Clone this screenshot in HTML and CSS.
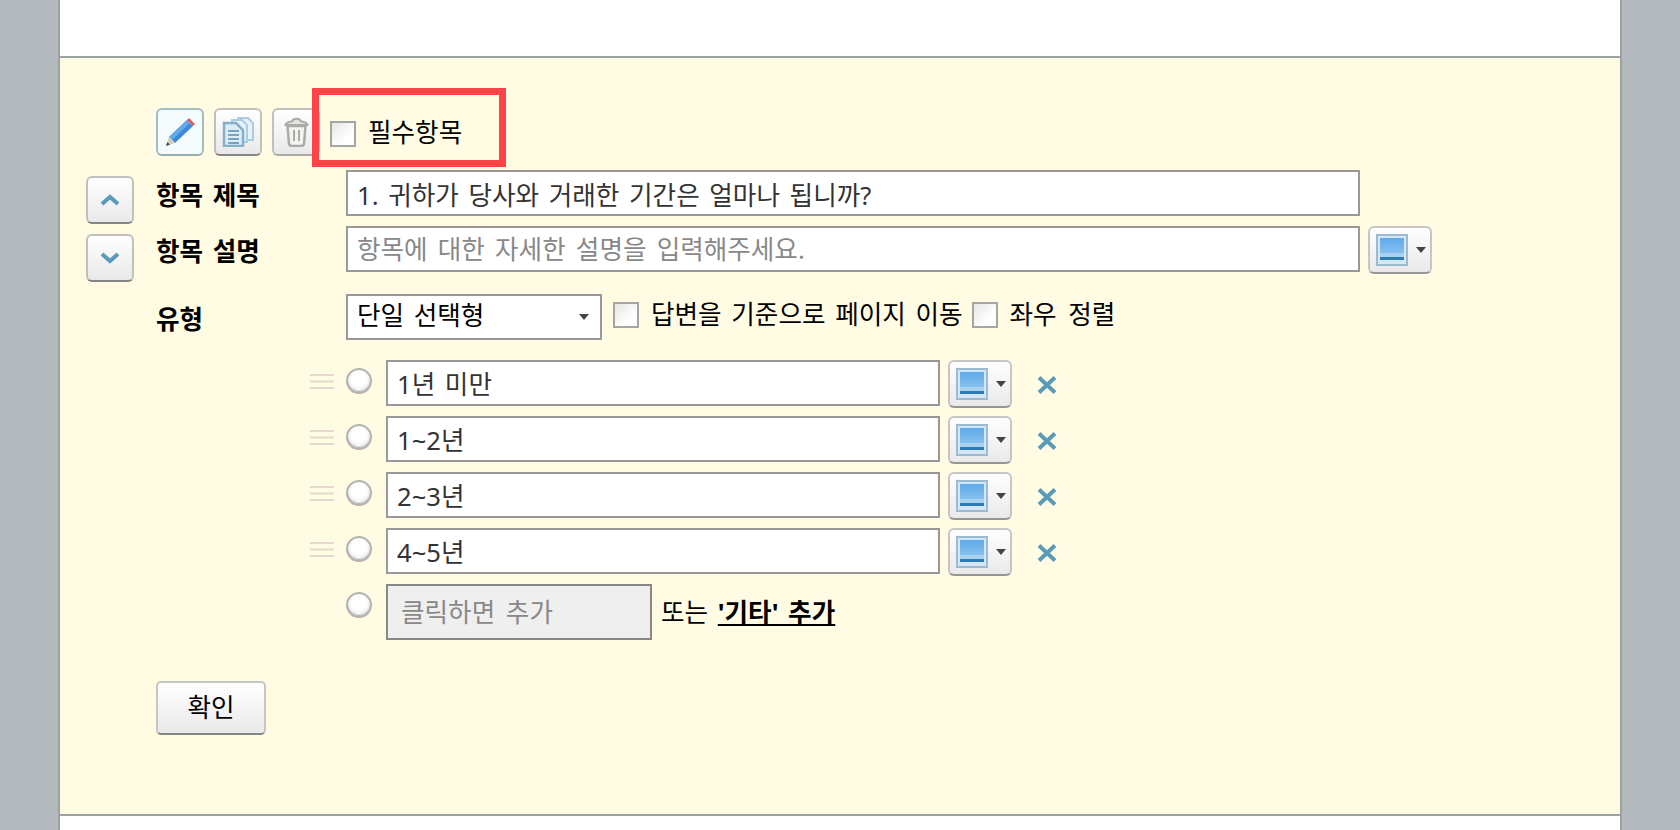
FILE: index.html
```html
<!DOCTYPE html>
<html lang="ko">
<head>
<meta charset="utf-8">
<title>항목 편집</title>
<link rel="stylesheet" href="styles.css">
</head>
<body>
<svg class="defs" width="0" height="0" aria-hidden="true">
  <defs>
    <linearGradient id="g-style" x1="0" y1="0" x2="0" y2="1">
      <stop offset="0" stop-color="#5eaaea"/>
      <stop offset="1" stop-color="#86c0ef"/>
    </linearGradient>
    <symbol id="i-style" viewBox="0 0 32 32">
      <rect x="1" y="1" width="30" height="30" fill="#d5e7f4" stroke="#9bbbd0" stroke-width="2"/>
      <rect x="4" y="4" width="24" height="15" fill="url(#g-style)"/>
      <rect x="4" y="19" width="24" height="4" fill="#a9d0ec"/>
      <rect x="4" y="23" width="24" height="3" fill="#2a7cb2"/>
    </symbol>
    <symbol id="i-x" viewBox="0 0 20 18">
      <path d="M2 1.500 18 16.500M18 1.500 2 16.500" fill="none" stroke="#5a9abb" stroke-width="4"/>
    </symbol>
    <symbol id="i-handle" viewBox="0 0 24 15">
      <path d="M0 1h24M0 7.500h24M0 14h24" stroke="#e6d8cc" stroke-width="2"/>
    </symbol>
  </defs>
</svg>
<div class="page">
  <div class="top"></div>
  <section class="editor">
    <div class="toolbar">
      <button class="sq sq-active" type="button" aria-label="편집">
        <svg class="icon" width="30" height="30" viewBox="0 0 30 30">
          <path d="M22 3 28 9 10 26 4 20Z" fill="#3f88d8"/>
          <path d="M22 3 25 6 7 23 4 20Z" fill="#63a9ec"/>
          <path d="M22 3 24 1 30 7 28 9Z" fill="#e05a5a"/>
          <path d="M4 20 10 26 1 29Z" fill="#d9cfc0"/>
          <path d="M2.400 25 5 27.500 1 29Z" fill="#444"/>
        </svg>
      </button>
      <button class="sq" type="button" aria-label="복사">
        <svg class="icon" width="32" height="30" viewBox="0 0 32 30">
          <path d="M16 1H26L31 6V23H16Z" fill="#e6f3fa" stroke="#a9cde2" stroke-width="2"/>
          <path d="M10 3H20L25 8V25H10Z" fill="#e6f3fa" stroke="#a9cde2" stroke-width="2"/>
          <path d="M2 6H14L21 13V29H2Z" fill="#dcedf7" stroke="#86afca" stroke-width="2.500"/>
          <path d="M6 14H17M6 18H17M6 22H17M6 26H17" stroke="#7aa2bd" stroke-width="2"/>
        </svg>
      </button>
      <button class="sq sq-trash" type="button" aria-label="삭제">
        <svg class="icon" width="25" height="30" viewBox="0 0 25 30">
          <path d="M1.500 8C1.500 5 7 5 8.500 4 9 1 16 1 16.500 4 18 5 23.500 5 23.500 8Z" fill="#e4e4e0" stroke="#aaaaa6" stroke-width="2"/>
          <path d="M3.500 9 5 27Q5.500 29 8 29H17Q19.500 29 20 27L21.500 9Z" fill="#f3f3ef" stroke="#aaaaa6" stroke-width="2.500"/>
          <path d="M10 13V24M15 13V24" stroke="#aaaaa6" stroke-width="2"/>
        </svg>
      </button>
      <label class="check-label required"><input class="check" type="checkbox"><span>필수항목</span></label>
      <div class="highlight"></div>
    </div>
    <div class="form">
      <div class="arrows">
        <button class="sq" type="button" aria-label="위로">
          <svg class="icon" width="20" height="12" viewBox="0 0 20 12"><path d="M2 10 10 3 18 10" fill="none" stroke="#5a9abb" stroke-width="4"/></svg>
        </button>
        <button class="sq" type="button" aria-label="아래로">
          <svg class="icon" width="20" height="12" viewBox="0 0 20 12"><path d="M2 2 10 9 18 2" fill="none" stroke="#5a9abb" stroke-width="4"/></svg>
        </button>
      </div>
      <div class="fields">
        <div class="row row-title">
          <label class="label">항목 제목</label>
          <input class="text text-wide text-title" type="text" value="1. 귀하가 당사와 거래한 기간은 얼마나 됩니까?">
        </div>
        <div class="row row-desc">
          <label class="label">항목 설명</label>
          <input class="text text-wide text-desc" type="text" placeholder="항목에 대한 자세한 설명을 입력해주세요.">
          <button class="style-btn" type="button" aria-label="스타일"><svg class="icon" width="32" height="32"><use href="#i-style"/></svg><i class="caret"></i></button>
        </div>
        <div class="row row-type">
          <label class="label label-type">유형</label>
          <div class="select-wrap">
            <select class="select"><option>단일 선택형</option></select>
            <i class="caret"></i>
          </div>
          <label class="check-label jump"><input class="check" type="checkbox"><span>답변을 기준으로 페이지 이동</span></label>
          <label class="check-label align"><input class="check" type="checkbox"><span>좌우 정렬</span></label>
        </div>
        <div class="options">
          <div class="option">
            <svg class="handle" width="24" height="15"><use href="#i-handle"/></svg>
            <input class="radio" type="radio" name="q">
            <input class="text text-opt" type="text" value="1년 미만">
            <button class="style-btn" type="button" aria-label="스타일"><svg class="icon" width="32" height="32"><use href="#i-style"/></svg><i class="caret"></i></button>
            <svg class="remove icon" width="20" height="18"><use href="#i-x"/></svg>
          </div>
          <div class="option">
            <svg class="handle" width="24" height="15"><use href="#i-handle"/></svg>
            <input class="radio" type="radio" name="q">
            <input class="text text-opt" type="text" value="1~2년">
            <button class="style-btn" type="button" aria-label="스타일"><svg class="icon" width="32" height="32"><use href="#i-style"/></svg><i class="caret"></i></button>
            <svg class="remove icon" width="20" height="18"><use href="#i-x"/></svg>
          </div>
          <div class="option">
            <svg class="handle" width="24" height="15"><use href="#i-handle"/></svg>
            <input class="radio" type="radio" name="q">
            <input class="text text-opt" type="text" value="2~3년">
            <button class="style-btn" type="button" aria-label="스타일"><svg class="icon" width="32" height="32"><use href="#i-style"/></svg><i class="caret"></i></button>
            <svg class="remove icon" width="20" height="18"><use href="#i-x"/></svg>
          </div>
          <div class="option">
            <svg class="handle" width="24" height="15"><use href="#i-handle"/></svg>
            <input class="radio" type="radio" name="q">
            <input class="text text-opt" type="text" value="4~5년">
            <button class="style-btn" type="button" aria-label="스타일"><svg class="icon" width="32" height="32"><use href="#i-style"/></svg><i class="caret"></i></button>
            <svg class="remove icon" width="20" height="18"><use href="#i-x"/></svg>
          </div>
          <div class="option option-add">
            <input class="radio" type="radio" name="q">
            <input class="text text-add" type="text" placeholder="클릭하면 추가">
            <span class="add-note">또는 <a class="add-link" href="#">'기타' 추가</a></span>
          </div>
        </div>
      </div>
    </div>
    <button class="confirm" type="button">확인</button>
  </section>
</div>
</body>
</html>
```

FILE: styles.css
```css
* { box-sizing: border-box; }
html, body { margin: 0; height: 830px; overflow: hidden; }
body {
  background: #b4babe;
  font-family: "Noto Sans", "Noto Sans CJK KR", sans-serif;
  font-size: 25.6px;
  color: #000;
}
.defs { position: absolute; }
.icon { filter: blur(0.5px); }
.page {
  margin-left: 58px;
  width: 1564px;
  height: 830px;
  background: #fff;
  border-left: 2px solid #9aa3a3;
  border-right: 2px solid #9aa3a3;
}
.top { height: 58px; border-bottom: 2px solid #9aa3a3; }
.editor {
  position: relative;
  height: 758px;
  padding: 50px 0 0 26px;
  background: #fffce3;
  border-bottom: 2px solid #9aa3a3;
}
.sq {
  display: flex;
  align-items: center;
  justify-content: center;
  width: 48px;
  height: 48px;
  padding: 0;
  border: 2px solid #c0c0bd;
  border-bottom-color: #858583;
  border-radius: 6px;
  background: linear-gradient(#ffffff, #e9e9e9);
}
.sq-active { background: #f3fbfd; border-color: #a3bfc2; border-bottom-color: #93afb2; }
.sq-trash { border-bottom-color: #aaaaa7; }
.toolbar {
  position: relative;
  display: flex;
  align-items: center;
  gap: 10px;
  margin-left: 70px;
  height: 48px;
}
.highlight {
  position: absolute;
  left: 156px;
  top: -20px;
  width: 194px;
  height: 79px;
  border: 7px solid #ff4449;
  pointer-events: none;
}
.check-label { display: flex; align-items: center; word-spacing: 3px; }
.check-label span { margin-top: -5px; }
.check {
  appearance: none;
  flex: none;
  width: 26px;
  height: 26px;
  margin: 0 12px 0 0;
  border: 2px solid #a5a5a2;
  background: linear-gradient(135deg, #e6e6e4, #ffffff 70%);
}
.required { margin-top: 4px; margin-left: 0; }
.required span { margin-top: -6px; }
.form { display: flex; margin-top: 14px; }
.arrows {
  flex: none;
  display: flex;
  flex-direction: column;
  gap: 10px;
  width: 48px;
  margin: 6px 22px 0 0;
}
.fields { flex: 1; }
.row { display: flex; align-items: center; }
.label { flex: none; width: 190px; font-weight: 700; word-spacing: 3px; margin-top: 2px; }
.row-title { height: 46px; margin-bottom: 10px; }
.row-desc { height: 48px; margin-bottom: 20px; }
.row-desc .label { margin-top: 0; }
.row-type { height: 46px; margin-bottom: 20px; }
.row .label-type { margin-top: 2px; }
.text {
  height: 46px;
  padding: 0 9px;
  border: 2px solid #999;
  border-radius: 0;
  outline: 0;
  background: #fff;
  font: inherit;
  color: #333;
}
.row-desc .text { align-self: flex-start; }
.text-title { word-spacing: 3px; padding-top: 1px; }
.text-desc { word-spacing: 3.500px; padding-top: 1px; }
.text::placeholder { color: #888; opacity: 1; }
.text-wide { width: 1014px; }
.text-opt { width: 554px; word-spacing: 3px; }
.text-add { width: 266px; height: 56px; background: #efefef; padding: 1px 13px 0; border-color: #888; word-spacing: 4px; }
.style-btn {
  display: flex;
  align-items: center;
  width: 64px;
  height: 48px;
  margin-left: 8px;
  padding: 0 0 0 6px;
  border: 2px solid #c6c6c3;
  border-bottom-color: #969694;
  border-radius: 6px;
  background: linear-gradient(#fff, #e9e9e9);
}
.style-btn .caret { margin-left: 8px; }
.caret {
  display: block;
  flex: none;
  width: 0;
  height: 0;
  border: 5px solid transparent;
  border-top: 6px solid #444;
  border-bottom: 0;
}
.select-wrap { position: relative; width: 256px; height: 46px; }
.select {
  appearance: none;
  width: 100%;
  height: 100%;
  padding: 0 9px 4px;
  border: 2px solid #999;
  border-radius: 0;
  background: #fff;
  font: inherit;
  color: #000;
  word-spacing: 3px;
}
.select-wrap .caret { position: absolute; right: 13px; top: 20px; }
.jump { margin: -4px 0 0 11px; }
.align { margin: -4px 0 0 9px; word-spacing: 5px; }
.options { display: flex; flex-direction: column; gap: 10px; margin-left: 154px; }
.option { display: flex; align-items: flex-start; height: 46px; }
.handle { flex: none; margin: 14px 12px 0 0; }
.radio {
  appearance: none;
  flex: none;
  width: 26px;
  height: 26px;
  margin: 8px 14px 0 0;
  border: 2px solid #b4b4af;
  border-radius: 50%;
  background: radial-gradient(circle at 50% 40%, #fff 40%, #e0e0e0);
  box-shadow: inset 0 -1px 1px #aaa;
}
.remove { flex: none; margin: 16px 0 0 25px; }
.option-add { height: 56px; padding-left: 36px; }
.add-note { margin: 8px 0 0 9px; word-spacing: 3px; }
.add-link { color: #000; font-weight: 700; }
.confirm {
  display: block;
  width: 110px;
  height: 54px;
  margin: 41px 0 0 70px;
  padding: 0 0 5px;
  border: 2px solid #c6c6c3;
  border-bottom-color: #858583;
  border-radius: 5px;
  background: linear-gradient(#fff, #e9e9e9);
  font: inherit;
  color: #000;
}
```
